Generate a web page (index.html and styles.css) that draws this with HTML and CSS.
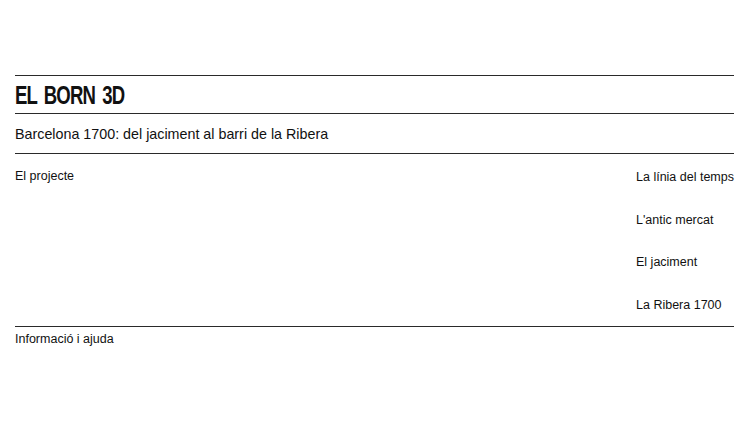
FILE: index.html
```html
<!DOCTYPE html>
<html lang="ca">
<head>
    <meta charset="UTF-8">
    <meta name="viewport" content="width=device-width, initial-scale=1.0">
    <title>El Born 3D</title>
    <link rel="stylesheet" href="styles.css">
</head>
<body>
<div class="page">
    <header class="site-header">
        <h1>EL BORN 3D</h1>
    </header>

    <p class="subtitle">Barcelona 1700: del jaciment al barri de la Ribera</p>

    <nav class="main-nav">
        <a href="#" class="nav-left">El projecte</a>
        <ul class="nav-list">
            <li><a href="#">La línia del temps</a></li>
            <li><a href="#">L'antic mercat</a></li>
            <li><a href="#">El jaciment</a></li>
            <li><a href="#">La Ribera 1700</a></li>
        </ul>
    </nav>

    <footer class="site-footer">
        <a href="#">Informació i ajuda</a>
    </footer>
</div>
</body>
</html>
```

FILE: styles.css
```css
:root {
    --line-color: #2a2a2a;
    --text-color: #111;
}

* {
    margin: 0;
    padding: 0;
    box-sizing: border-box;
}

body {
    font-family: 'Liberation Sans', Arial, sans-serif;
    color: var(--text-color);
    background: #fff;
}

.page {
    padding: 75px 16px 0 15px;
}

a {
    color: inherit;
    text-decoration: none;
}

.site-header {
    border-top: 1px solid var(--line-color);
    height: 38px;
    display: flex;
    align-items: center;
}

/* condensed display face: no narrow font installed, so squeeze the bold sans */
.site-header h1 {
    font-weight: 700;
    font-size: 26.5px;
    letter-spacing: -1.2px;
    word-spacing: 4px;
    line-height: 1;
    padding-top: 2px;
    transform: scaleX(0.7);
    transform-origin: left center;
    white-space: nowrap;
}

.subtitle {
    border-top: 1px solid var(--line-color);
    height: 40px;
    display: flex;
    align-items: center;
    font-size: 14.3px;
}

.main-nav {
    border-top: 1px solid var(--line-color);
    height: 173px;
    display: flex;
    justify-content: space-between;
    padding-top: 15px;
    font-size: 12.5px;
}

.nav-list {
    list-style: none;
    display: flex;
    flex-direction: column;
    gap: 28.5px;
    padding-top: 1px;
    white-space: nowrap;
}

.site-footer {
    border-top: 1px solid var(--line-color);
    padding-top: 5px;
    font-size: 12.5px;
}
```
